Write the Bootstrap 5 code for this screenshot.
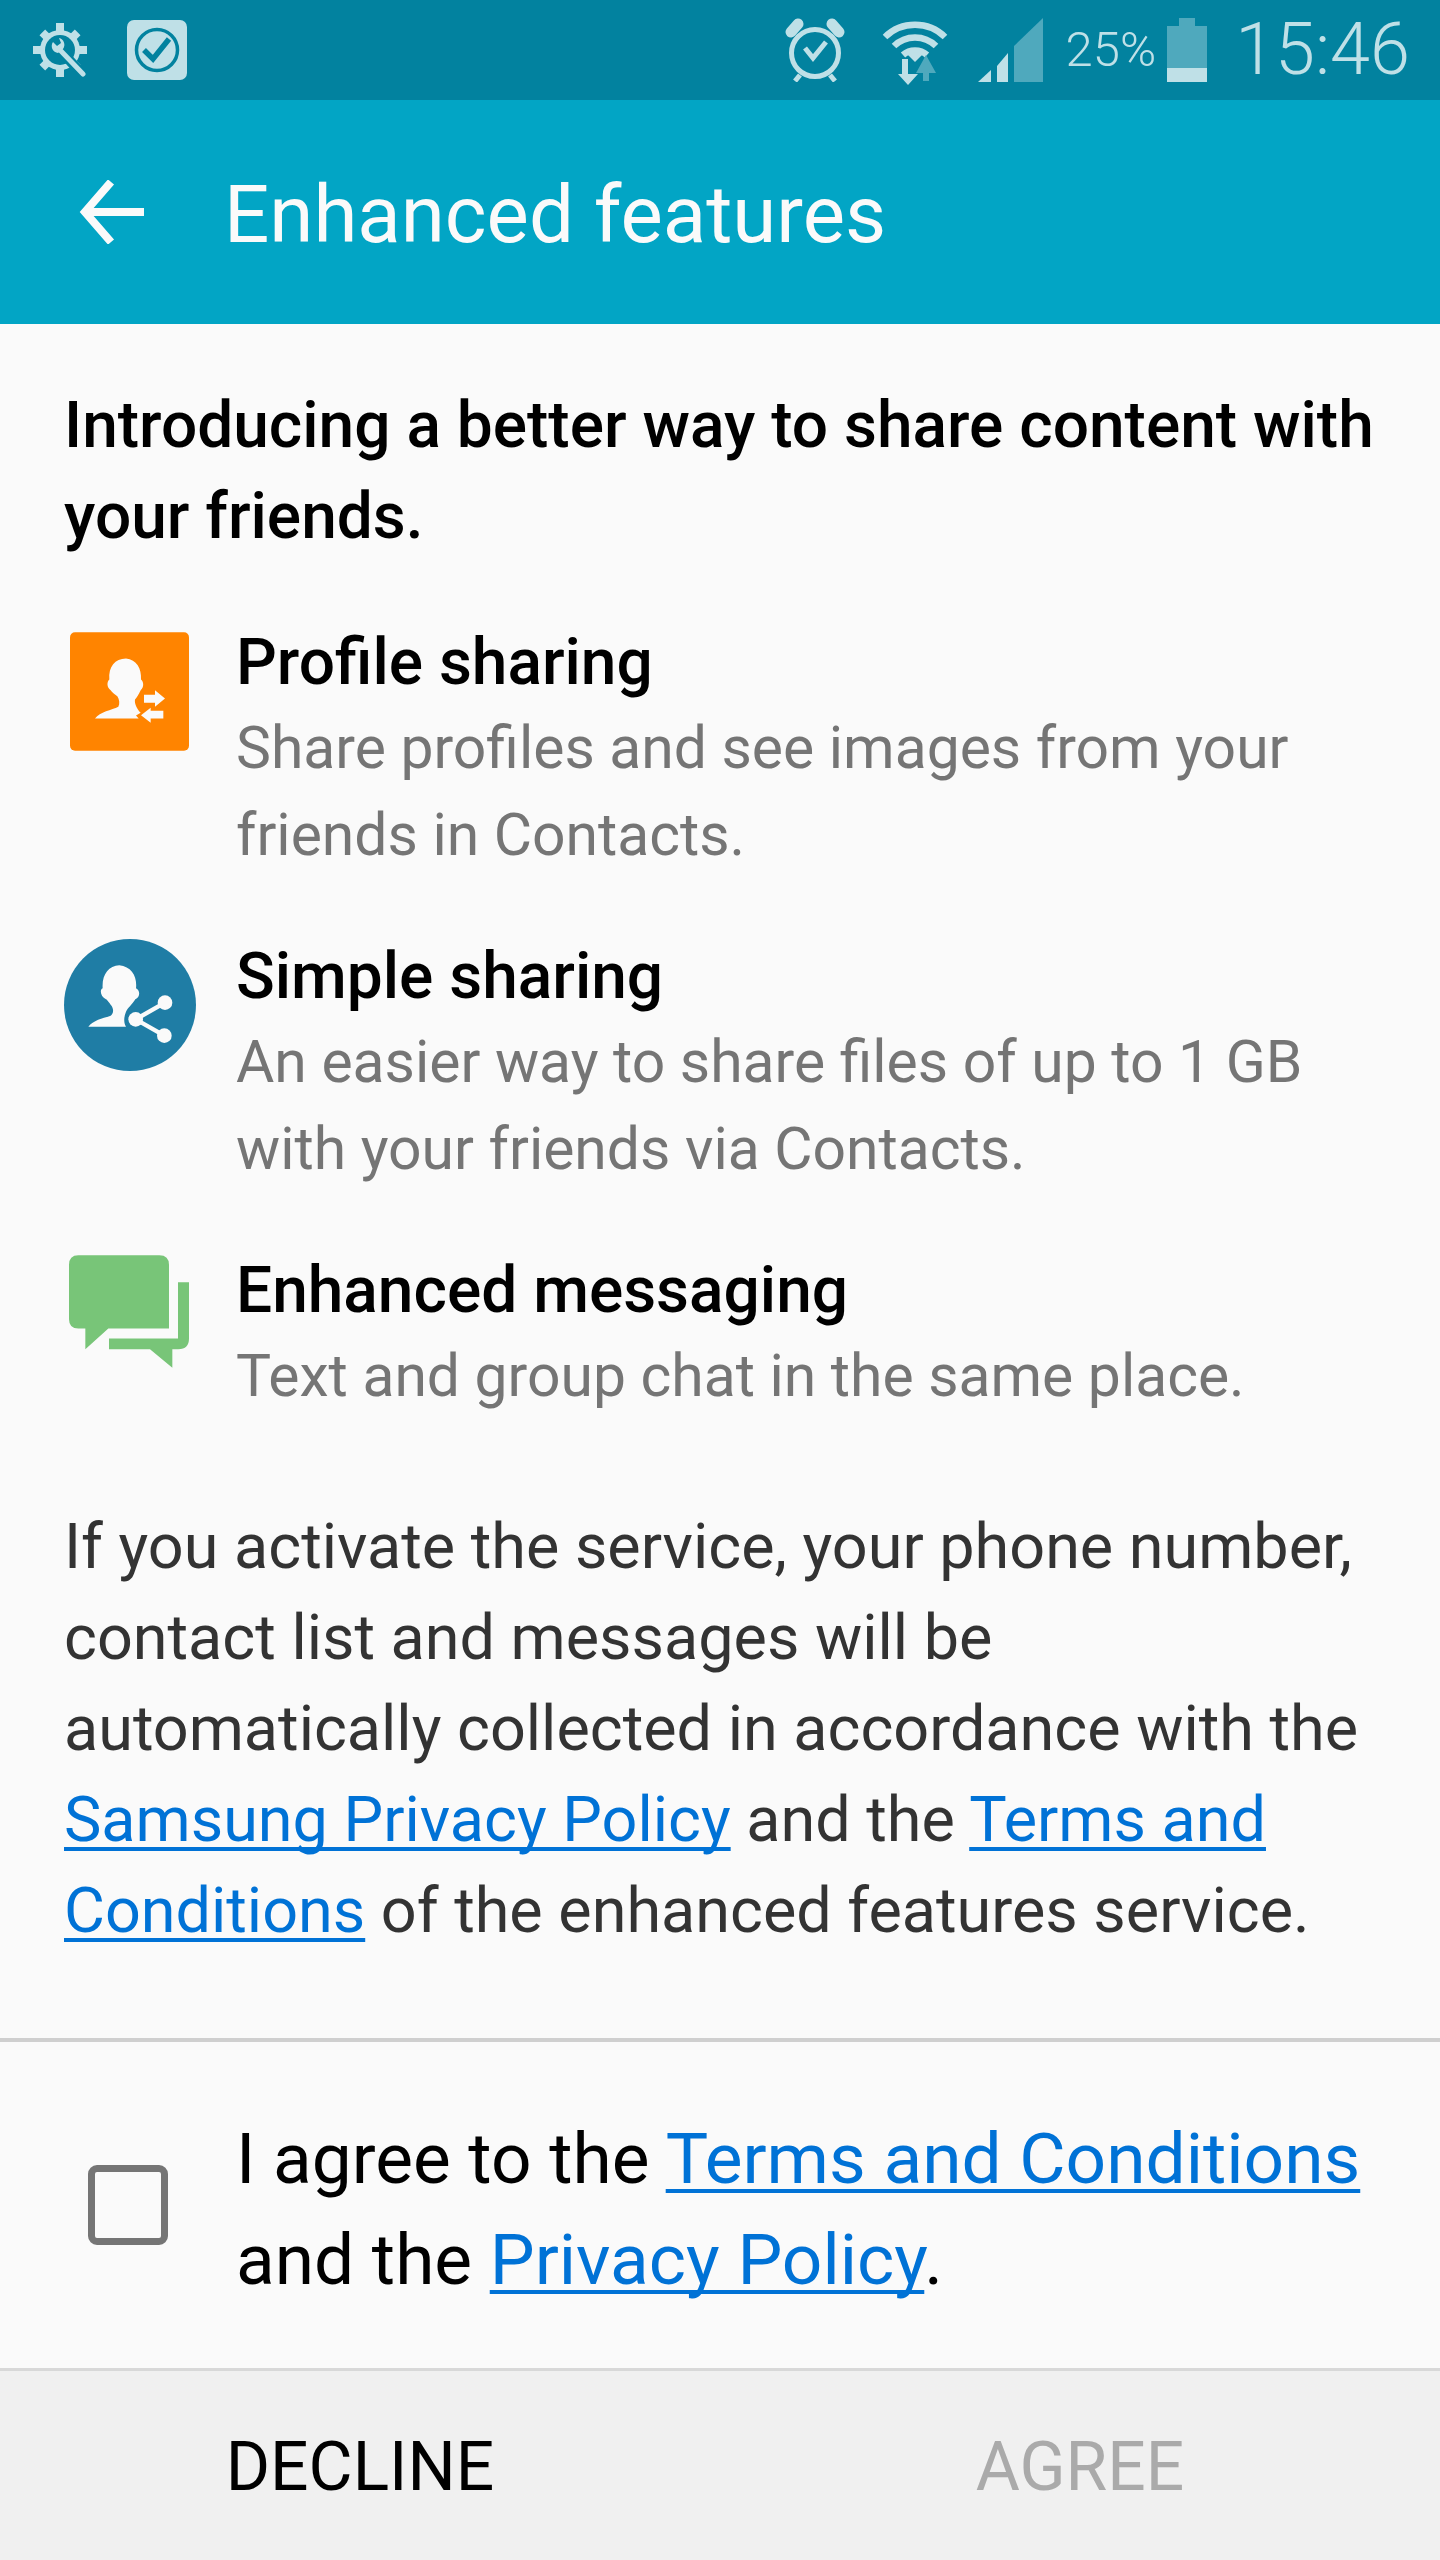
<!DOCTYPE html>
<html lang="en">
  <head>
    <meta charset="UTF-8" />
    <meta name="viewport" content="width=device-width, initial-scale=1.0" />
    <title>Enhanced features</title>
    <link
      href="https://cdn.jsdelivr.net/npm/bootstrap@5.3.2/dist/css/bootstrap.min.css"
      rel="stylesheet"
    />
    <style>
      body {
        background: #fafafa;
        font-family: Roboto, "Liberation Sans", sans-serif;
        width: 1440px;
        height: 2560px;
        overflow: hidden;
      }
      a {
        color: #0072d6;
        text-decoration-thickness: 4px;
        text-underline-offset: 6px;
        text-decoration-skip-ink: none;
      }
      /* status bar */
      .status-bar {
        height: 100px;
        background: #02829f;
        color: #bfe0e7;
        padding: 0 30px 0 33px;
      }
      .status-pct {
        font-size: 49px;
        font-weight: 300;
        margin: 0 11px 0 23px;
      }
      .status-time {
        font-size: 72px;
        font-weight: 300;
        margin-left: 28px;
      }
      .gap-check {
        margin-left: 40px;
      }
      .gap-wifi {
        margin: 0 30px 0 37px;
      }
      /* app bar */
      .app-bar {
        height: 224px;
        background: #02a5c5;
        color: #fafafa;
        padding-left: 79px;
      }
      .app-title {
        font-size: 79.8px;
        font-weight: 400;
        margin: 6px 0 0 80px;
        line-height: 1;
      }
      /* content */
      .intro {
        font-size: 64px;
        font-weight: 500;
        line-height: 91px;
        color: #000;
        margin: 56px 0 58px;
        padding: 0 50px 0 64px;
      }
      .feature {
        padding-left: 65px;
        margin-bottom: 56px;
      }
      .feature-icon {
        width: 171px;
        flex: none;
      }
      .feature-icon svg {
        display: block;
      }
      .icon-orange {
        margin: 12px 0 0 5px;
      }
      .icon-blue {
        margin: 5px 0 0 -1px;
      }
      .icon-green {
        margin: 7px 0 0 4px;
      }
      .feature-title {
        font-size: 64px;
        font-weight: 500;
        line-height: 82px;
        padding-top: 2px;
        color: #000;
      }
      .feature-desc {
        font-size: 58.8px;
        line-height: 87px;
        color: #757575;
      }
      .notice {
        font-size: 62.9px;
        line-height: 91px;
        color: #333;
        margin: 82px 0;
        padding: 0 65px 0 64px;
      }
      .agree-row {
        height: 333px;
        border-top: 4px solid #cfcfcf;
        border-bottom: 3px solid #d8d8d8;
      }
      .agree-check {
        width: 236px;
        padding-left: 88px;
        flex: none;
      }
      .agree-check .form-check-input {
        width: 80px;
        height: 80px;
        margin: 0;
        border: 7px solid #757575;
        border-radius: 9px;
        background-color: transparent;
        display: block;
      }
      .agree-text {
        font-size: 71.2px;
        line-height: 101px;
        color: #000;
        padding-top: 8px;
        white-space: nowrap;
      }
      .bottom-bar {
        height: 189px;
        background: #f0f0f0;
      }
      .bottom-btn {
        font-size: 67.7px;
        line-height: 189px;
        padding: 2px 0 0;
        border: 0;
        border-radius: 0;
        color: #000;
        width: 100%;
      }
      .bottom-btn:disabled {
        color: #aaa;
        opacity: 1;
        border: 0;
      }
    </style>
  </head>
  <body>
    <!-- status bar -->
    <div class="status-bar d-flex align-items-center justify-content-between">
      <div class="d-flex align-items-center">
        <svg width="54" height="54" viewBox="0 0 54 54">
          <g fill="#bfe0e7">
            <rect x="23" y="0" width="8" height="54" />
            <rect x="0" y="23" width="54" height="8" />
            <rect x="23" y="2" width="8" height="50" transform="rotate(45 27 27)" />
            <rect x="23" y="2" width="8" height="50" transform="rotate(-45 27 27)" />
          </g>
          <circle cx="27" cy="27" r="20" fill="#bfe0e7" />
          <circle cx="27" cy="27" r="15" fill="#02829f" />
          <path d="M26 26 L50 52" stroke="#02829f" stroke-width="10" />
          <path d="M27 27 L50 51" stroke="#bfe0e7" stroke-width="5" stroke-linecap="round" />
          <path d="M20 19 A7 7 0 0 0 25 30 L30 26 A7 7 0 0 0 26 15 L28 20 L24 23 Z" fill="#bfe0e7" />
        </svg>
        <svg class="gap-check" width="60" height="60" viewBox="0 0 60 60">
          <rect width="60" height="60" rx="7" fill="#bfe0e7" />
          <circle cx="30" cy="30" r="20.5" fill="none" stroke="#02829f" stroke-width="3.5" />
          <path d="M17 30 L26 39 L42 19" fill="none" stroke="#02829f" stroke-width="5.5" />
        </svg>
      </div>
      <div class="d-flex align-items-center">
        <svg width="60" height="64" viewBox="0 0 60 64">
          <g fill="none" stroke="#bfe0e7">
            <circle cx="30" cy="35" r="23.5" stroke-width="5" />
            <path d="M20 30 L28 40 L41 24" stroke-width="5" />
            <path d="M15 57 L10 63 M45 57 L50 63" stroke-width="5" />
            <path d="M6 14 L13 6 M54 14 L47 6" stroke-width="11" stroke-linecap="round" />
          </g>
        </svg>
        <svg class="gap-wifi" width="66" height="72" viewBox="0 0 66 72">
          <g fill="none" stroke="#bfe0e7" stroke-width="6.5">
            <path d="M3 23 A43 43 0 0 1 63 23" />
            <path d="M12 32 A30 30 0 0 1 54 32" />
            <path d="M21 41 A18 18 0 0 1 45 41" />
          </g>
          <path d="M26 41 Q33 35 40 41 L33 48 Z" fill="#bfe0e7" />
          <path d="M44 41 L54 59 H47 V67 H41 V59 H34 Z" fill="#4fa9bd" />
          <path d="M20 45 H26 V60 H36 L26 71 L16 60 H20 Z" fill="#bfe0e7" />
        </svg>
        <svg width="65" height="64" viewBox="0 0 65 64">
          <path d="M0 64 L13 52 V64 Z" fill="#bfe0e7" />
          <path d="M19 64 V48 L30 35 V64 Z" fill="#bfe0e7" />
          <path d="M36 64 V28 L65 0 V64 Z" fill="#4fa9bd" />
        </svg>
        <span class="status-pct">25%</span>
        <svg width="40" height="64" viewBox="0 0 40 64">
          <path d="M12 0 H28 V8 H40 V64 H0 V8 H12 Z" fill="#4fa9bd" />
          <rect y="50" width="40" height="14" fill="#bfe0e7" />
        </svg>
        <span class="status-time">15:46</span>
      </div>
    </div>

    <!-- app bar -->
    <div class="app-bar d-flex align-items-center">
      <svg width="65" height="64" viewBox="0 0 65 64">
        <path d="M65 32 H6 M32 2 L6 32 L32 62" fill="none" stroke="#fafafa" stroke-width="8" />
      </svg>
      <h1 class="app-title">Enhanced features</h1>
    </div>

    <p class="intro">Introducing a better way to share content with your friends.</p>

    <div class="feature d-flex">
      <div class="feature-icon">
        <svg class="icon-orange" width="119" height="119" viewBox="90 66 357 356">
          <rect x="90" y="66" width="357" height="356" rx="15" fill="#ff8400" />
          <g fill="#fafafa">
            <path d="M165 325 C180 305 215 300 235 290 C240 280 238 268 232 258 C222 250 215 245 212 240 C200 232 200 215 208 208 C205 170 225 145 258 145 C290 148 305 175 303 208 C312 215 312 232 302 240 C295 255 290 262 285 268 C283 280 290 295 302 308 L288 316 L296 325 Z" />
            <path d="M312 254 H345 V240 L375 265 L345 290 V278 H312 Z" />
            <path d="M370 302 V325 H332 V338 L303 315 L332 293 V302 Z" />
          </g>
        </svg>
      </div>
      <div>
        <div class="feature-title">Profile sharing</div>
        <div class="feature-desc">Share profiles and see images from your<br />friends in Contacts.</div>
      </div>
    </div>

    <div class="feature d-flex">
      <div class="feature-icon">
        <svg class="icon-blue" width="132" height="132" viewBox="72 57 396 396">
          <circle cx="270" cy="255" r="198" fill="#1f7da5" />
          <g fill="#fafafa">
            <path d="M145 320 C160 300 190 295 212 287 C220 280 222 270 215 258 C205 245 200 238 198 238 C182 230 178 210 188 205 C185 165 205 138 238 136 C275 140 292 170 288 205 C302 212 300 232 286 238 C275 255 265 262 258 275 C250 295 252 310 258 320 Z" />
            <circle cx="287" cy="298" r="22" />
            <circle cx="375" cy="248" r="22" />
            <circle cx="373" cy="347" r="22" />
          </g>
          <path d="M375 248 L287 298 L373 347" fill="none" stroke="#fafafa" stroke-width="13" />
        </svg>
      </div>
      <div>
        <div class="feature-title">Simple sharing</div>
        <div class="feature-desc">An easier way to share files of up to 1 GB<br />with your friends via Contacts.</div>
      </div>
    </div>

    <div class="feature d-flex mb-0">
      <div class="feature-icon">
        <svg class="icon-green" width="120" height="113" viewBox="87 75 360 338">
          <g fill="#78c578">
            <path d="M115 75 H358 Q387 75 387 104 V295 H205 L136 357 V295 H115 Q87 295 87 267 V104 Q87 75 115 75 Z" />
            <path d="M414 156 H447 V325 Q447 357 415 357 H397 V413 L330 357 H207 V325 H414 Z" />
          </g>
        </svg>
      </div>
      <div>
        <div class="feature-title">Enhanced messaging</div>
        <div class="feature-desc">Text and group chat in the same place.</div>
      </div>
    </div>

    <p class="notice">
      If you activate the service, your phone number, contact list and messages will be automatically collected in accordance with the
      <a href="#">Samsung Privacy Policy</a> and the <a href="#">Terms and Conditions</a> of the enhanced features service.
    </p>

    <div class="agree-row d-flex align-items-center">
      <div class="agree-check">
        <input class="form-check-input" type="checkbox" aria-label="Agree" />
      </div>
      <div class="agree-text">
        I agree to the <a href="#">Terms and Conditions</a><br />and the <a href="#">Privacy Policy</a>.
      </div>
    </div>

    <div class="bottom-bar row g-0">
      <div class="col-6"><button class="btn bottom-btn" type="button">DECLINE</button></div>
      <div class="col-6"><button class="btn bottom-btn" type="button" disabled>AGREE</button></div>
    </div>

    <script src="https://cdn.jsdelivr.net/npm/bootstrap@5.3.2/dist/js/bootstrap.bundle.min.js"></script>
  </body>
</html>
